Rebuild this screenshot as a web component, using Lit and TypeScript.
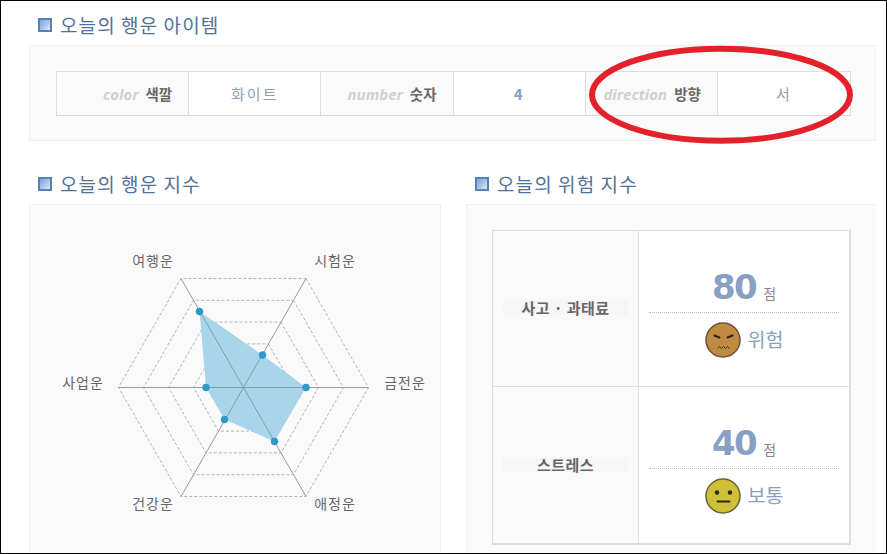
// app.ts - today's luck summary page

import { LitElement, html, css, svg } from 'lit';
import { customElement } from 'lit/decorators.js';

const CX = 243.5;
const CY = 387.5;
const RX = 125;
const RY = 109;

// hexagon corners, clockwise from upper right
const CORNERS = [
  [62.5, -RY],
  [RX, 0],
  [62.5, RY],
  [-62.5, RY],
  [-RX, 0],
  [-62.5, -RY],
];

const POINTS = [
  [262.5, 355],
  [306, 387.5],
  [274.5, 441.5],
  [224.5, 419.5],
  [206, 387.5],
  [199.5, 311.5],
];

const AXIS_LABELS = [
  { text: '시험운', x: 335, y: 259.5 },
  { text: '금전운', x: 405, y: 382 },
  { text: '애정운', x: 335, y: 502.5 },
  { text: '건강운', x: 153, y: 502.5 },
  { text: '사업운', x: 83, y: 382 },
  { text: '여행운', x: 153, y: 259.5 },
];

function ring(scale: number) {
  return CORNERS.map(([x, y]) => `${CX + x * scale},${CY + y * scale}`).join(' ');
}

@customElement('luck-radar')
export class LuckRadar extends LitElement {
  static styles = css`
    :host {
      position: absolute;
      left: -1px;
      top: -1px;
      display: block;
      width: 887px;
      height: 554px;
      pointer-events: none;
    }
    svg {
      display: block;
    }
    text {
      font-family: 'Noto Sans CJK KR', 'Noto Sans', sans-serif;
      font-size: 14px;
      fill: #666;
      text-anchor: middle;
      dominant-baseline: central;
      letter-spacing: 1px;
    }
    .ring {
      fill: none;
      stroke: #b4b4b4;
      stroke-width: 1;
      stroke-dasharray: 3 2;
    }
    .axis {
      stroke: #999;
      stroke-width: 1;
    }
    .area {
      fill: #a8d5e9;
    }
    .axis-over {
      stroke: #7d9fb0;
      stroke-width: 1;
    }
    .dot {
      fill: #3099c9;
    }
  `;

  render() {
    const area = POINTS.map((p) => p.join(',')).join(' ');
    return html`
      <svg width="887" height="554" viewBox="0 0 887 554">
        ${[0.2, 0.4, 0.6, 0.8, 1].map(
          (s) => svg`<polygon class="ring" points=${ring(s)}></polygon>`
        )}
        ${CORNERS.map(
          ([x, y]) =>
            svg`<line class="axis" x1=${CX} y1=${CY} x2=${CX + x} y2=${CY + y}></line>`
        )}
        <polygon class="area" points=${area}></polygon>
        <clipPath id="area-clip"><polygon points=${area}></polygon></clipPath>
        <g clip-path="url(#area-clip)">
          ${CORNERS.map(
            ([x, y]) =>
              svg`<line class="axis-over" x1=${CX} y1=${CY} x2=${CX + x} y2=${CY + y}></line>`
          )}
        </g>
        ${POINTS.map(
          ([x, y]) => svg`<circle class="dot" cx=${x} cy=${y} r="3.7"></circle>`
        )}
        ${AXIS_LABELS.map(
          (l) => svg`<text x=${l.x} y=${l.y}>${l.text}</text>`
        )}
      </svg>
    `;
  }
}

@customElement('app-root')
export class AppRoot extends LitElement {
  static styles = css`
    :host {
      display: block;
      width: 887px;
      height: 554px;
      font-family: 'Noto Sans CJK KR', 'Noto Sans', sans-serif;
    }
    .page {
      position: relative;
      box-sizing: border-box;
      width: 887px;
      height: 554px;
      overflow: hidden;
      background: #fff;
      border: 1px solid #000;
      padding: 0 10px 0 28px;
    }
    .title {
      display: flex;
      align-items: center;
      gap: 8px;
      height: 40px;
      padding-left: 9px;
      font-size: 19px;
      line-height: 40px;
      color: #4f7299;
      letter-spacing: 1.1px;
    }
    .title-icon {
      box-sizing: border-box;
      flex: none;
      width: 14px;
      height: 14px;
      border: 2px solid #5580b8;
      background: linear-gradient(135deg, #7ea3e0 0%, #a9c2ea 50%, #e4ecf8 100%);
    }
    .top .title {
      box-sizing: border-box;
      height: 44px;
      padding-top: 3px;
    }
    .panel {
      box-sizing: border-box;
      background: #fafafa;
      border: 1px solid #f0f0f0;
    }
    .item-panel {
      height: 96px;
      padding: 25px 25px 0 26px;
    }
    .item-table {
      display: grid;
      grid-template-columns: repeat(6, 1fr);
      height: 45px;
      width: 795px;
      box-sizing: border-box;
      border: 1px solid #ddd;
    }
    .item-label,
    .item-value {
      display: flex;
      align-items: center;
      box-sizing: border-box;
      border-right: 1px solid #ddd;
      font-size: 15px;
    }
    .item-value:last-child {
      border-right: none;
    }
    .item-label {
      justify-content: flex-end;
      gap: 7px;
      padding-right: 16px;
    }
    .item-value {
      justify-content: center;
      background: #fff;
      color: #8a9fb8;
      letter-spacing: 2px;
    }
    .item-number {
      font-weight: 700;
    }
    .en {
      font: italic bold 15px 'Open Sans', 'Liberation Sans', sans-serif;
      color: #d0d0d0;
    }
    .ko {
      font-size: 14.5px;
      font-weight: 700;
      color: #666;
    }
    .columns {
      display: flex;
      gap: 25px;
      margin-top: 23px;
    }
    .col-left {
      width: 412px;
    }
    .col-right {
      width: 410px;
    }
    .col-left .panel,
    .col-right .panel {
      height: 360px;
    }
    .col-right .panel {
      padding: 25px 0 0 25px;
      border-right: none;
    }
    .risk-table {
      display: grid;
      grid-template-columns: 146px 1fr;
      grid-auto-rows: 156px;
      box-sizing: border-box;
      width: 359px;
      border: 1px solid #ddd;
      border-right-width: 2px;
      border-bottom-width: 2px;
    }
    .risk-name {
      display: flex;
      align-items: center;
      justify-content: center;
      border-right: 1px solid #ddd;
      padding-bottom: 2px;
    }
    .risk-name span {
      width: 125px;
      text-align: center;
      background: #f6f6f6;
      font-size: 15px;
      font-weight: 700;
      letter-spacing: 0.4px;
      line-height: 15px;
      color: #666;
    }
    .risk-body {
      display: flex;
      flex-direction: column;
      align-items: center;
      justify-content: flex-start;
      padding: 36px 10px 0;
      background: #fff;
    }
    .risk-name:nth-last-child(n + 3),
    .risk-body:nth-last-child(n + 3) {
      border-bottom: 1px solid #ddd;
    }
    .score {
      display: flex;
      align-items: baseline;
      justify-content: center;
      gap: 7px;
      width: 100%;
      height: 45px;
      border-bottom: 1px dotted #bbb;
      font: bold 34px/40px 'DejaVu Sans', sans-serif;
      letter-spacing: -1.5px;
      color: #88a0c4;
    }
    .score small {
      font: 14px 'Noto Sans CJK KR', sans-serif;
      letter-spacing: 0;
      color: #888;
    }
    .verdict {
      display: flex;
      align-items: center;
      gap: 7px;
      margin-top: 9px;
      font-size: 19.5px;
      color: #8aa1bd;
    }
    .verdict span {
      margin-top: -4px;
    }
    .face {
      display: block;
      flex: none;
    }
    .circle-mark {
      position: absolute;
      left: -1px;
      top: -1px;
      pointer-events: none;
    }
  `;

  private angryFace() {
    return html`
      <svg class="face" width="36" height="36" viewBox="0 0 36 36">
        <circle cx="18" cy="18" r="17" fill="#c08a42" stroke="#6b5535" stroke-width="1.5"></circle>
        <path d="M9.5 13.5 L14.5 15.5 M27.5 13.5 L22.5 15.5" stroke="#2a2015" stroke-width="2" stroke-linecap="round" fill="none"></path>
        <path d="M12.5 26.5 l2 -2 2 2 2 -2 2 2 2 -2 2 2" stroke="#3a2c1a" stroke-width="1" fill="none"></path>
      </svg>
    `;
  }

  private neutralFace() {
    return html`
      <svg class="face" width="36" height="36" viewBox="0 0 36 36">
        <circle cx="18" cy="18" r="17" fill="#cfc137" stroke="#6b6235" stroke-width="1.5"></circle>
        <circle cx="12" cy="14.5" r="2.2" fill="#2a2515"></circle>
        <circle cx="25" cy="14.5" r="2.2" fill="#2a2515"></circle>
        <path d="M12.5 23.5 H24.5" stroke="#2a2515" stroke-width="2" stroke-linecap="round"></path>
      </svg>
    `;
  }

  render() {
    return html`
      <div class="page">
        <section class="top">
          <div class="title"><i class="title-icon"></i>오늘의 행운 아이템</div>
          <div class="panel item-panel">
            <div class="item-table">
              <div class="item-label"><span class="en">color</span><span class="ko">색깔</span></div>
              <div class="item-value">화이트</div>
              <div class="item-label"><span class="en">number</span><span class="ko">숫자</span></div>
              <div class="item-value item-number">4</div>
              <div class="item-label"><span class="en">direction</span><span class="ko">방향</span></div>
              <div class="item-value">서</div>
            </div>
          </div>
        </section>
        <div class="columns">
          <section class="col-left">
            <div class="title"><i class="title-icon"></i>오늘의 행운 지수</div>
            <div class="panel"></div>
          </section>
          <section class="col-right">
            <div class="title"><i class="title-icon"></i>오늘의 위험 지수</div>
            <div class="panel">
              <div class="risk-table">
                <div class="risk-name"><span>사고 · 과태료</span></div>
                <div class="risk-body">
                  <div class="score">80<small>점</small></div>
                  <div class="verdict">${this.angryFace()}<span>위험</span></div>
                </div>
                <div class="risk-name"><span>스트레스</span></div>
                <div class="risk-body">
                  <div class="score">40<small>점</small></div>
                  <div class="verdict">${this.neutralFace()}<span>보통</span></div>
                </div>
              </div>
            </div>
          </section>
        </div>
        <luck-radar></luck-radar>
        <svg class="circle-mark" width="887" height="554" viewBox="0 0 887 554">
          <ellipse cx="721" cy="94.7" rx="129" ry="46" fill="none" stroke="#e3212b" stroke-width="6"></ellipse>
        </svg>
      </div>
    `;
  }
}
